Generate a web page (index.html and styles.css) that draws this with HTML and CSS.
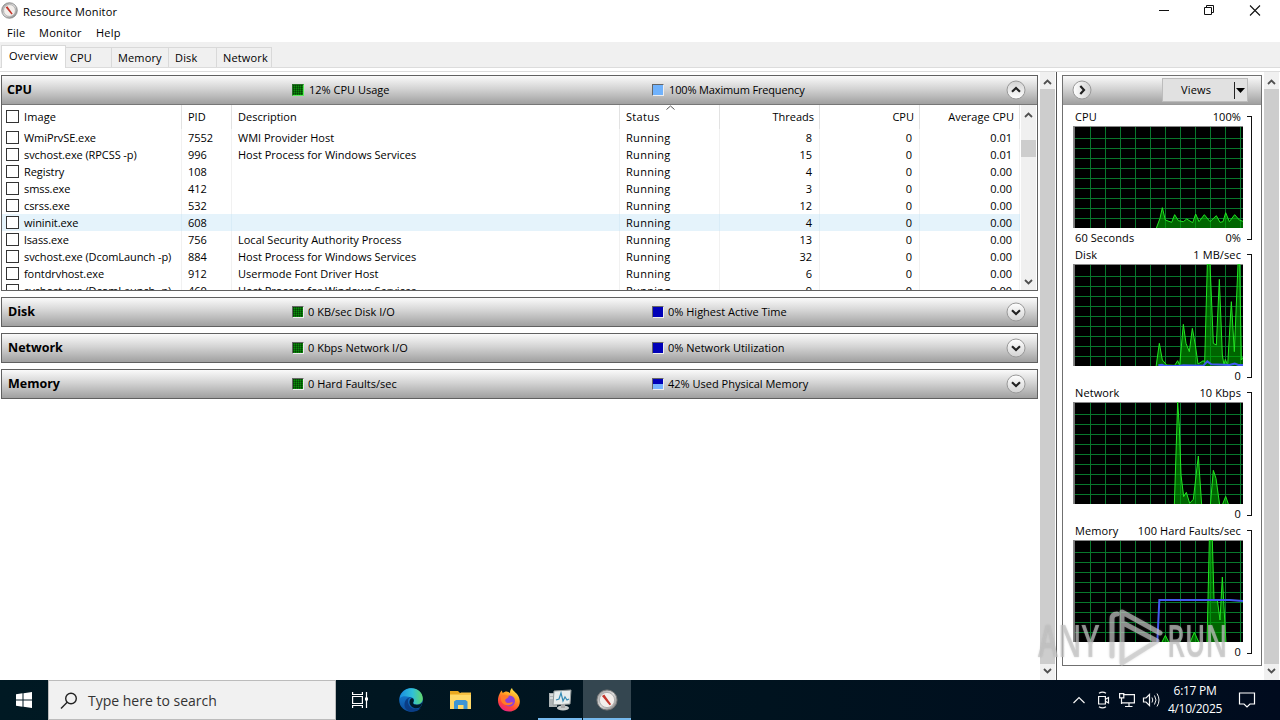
FILE: index.html
```html
<!DOCTYPE html>
<html lang="en">
<head>
<meta charset="utf-8">
<title>Resource Monitor</title>
<link rel="stylesheet" href="styles.css">
</head>
<body>
<svg width="0" height="0" class="defs">
  <defs>
    <linearGradient id="btn" x1="0" y1="0" x2="0" y2="1"><stop offset="0" stop-color="#fff"/><stop offset="1" stop-color="#d2d2d2"/></linearGradient>
    <linearGradient id="rim" x1="0" y1="0" x2="1" y2="1"><stop offset="0" stop-color="#999"/><stop offset=".5" stop-color="#ddd"/><stop offset="1" stop-color="#777"/></linearGradient>
    <linearGradient id="edgeA" x1="0" y1="0" x2="1" y2="0"><stop offset="0" stop-color="#1a8fe0"/><stop offset=".55" stop-color="#30c0d8"/><stop offset="1" stop-color="#62d86a"/></linearGradient>
    <linearGradient id="edgeB" x1="0" y1="0" x2="0" y2="1"><stop offset="0" stop-color="#1687de"/><stop offset="1" stop-color="#0c4c9c"/></linearGradient>
    <linearGradient id="fox" x1=".8" y1="0" x2=".3" y2="1"><stop offset="0" stop-color="#fff14d"/><stop offset=".4" stop-color="#ff9a22"/><stop offset=".75" stop-color="#ff4438"/><stop offset="1" stop-color="#e8208c"/></linearGradient>
    <symbol id="gauge" viewBox="0 0 24 24">
      <circle cx="12" cy="12" r="11" fill="url(#rim)" stroke="#777" stroke-width="1"/>
      <circle cx="12" cy="12" r="8.3" fill="#f3efec" stroke="#aaa"/>
      <path d="M6.500 7.500 9 6l7.500 10.500-1.700 1.200z" fill="#c3342a"/>
    </symbol>
    <symbol id="down" viewBox="0 0 20 20"><circle cx="10" cy="10" r="9" fill="url(#btn)" stroke="#999" stroke-width="1"/><path d="M6 8.300 10 12l4-3.700" fill="none" stroke="#222" stroke-width="2.200"/></symbol>
    <symbol id="chev" viewBox="0 0 9 6"><path d="M1 5 4.500 1.500 8 5" fill="none" stroke="#505050" stroke-width="1.800"/></symbol>
  </defs>
</svg>
<div class="window">
  <header class="titlebar">
    <svg class="app-icon" width="17" height="17"><use href="#gauge"/></svg>
    <span class="t-title">Resource Monitor</span>
    <svg class="caption" width="112" height="20" fill="none" stroke="#111"><path d="M7 10.500h10"/><path d="M52.500 7.500h7v7h-7zM54.500 7v-1.500h7v7H60"/><path d="m98 5.500 10 10m0-10-10 10" stroke-width="1.100"/></svg>
  </header>
  <nav class="menu"><span class="m-file">File</span><span class="m-mon">Monitor</span><span class="m-help">Help</span></nav>
  <div class="tabs">
    <span class="tab active">Overview</span><span class="tab w46">CPU</span><span class="tab w57">Memory</span><span class="tab w48">Disk</span><span class="tab w55">Network</span>
  </div>
  <div class="tabline"></div>
  <main class="content">
    <section class="left">
      <div class="panel">
        <div class="bar"><b class="name cpu">CPU</b><i class="sw green live"></i><span class="m1 ma">12% CPU Usage</span><i class="sw sky"></i><span class="m2 mb">100% Maximum Frequency</span><svg class="flip" width="20" height="20"><use href="#down"/></svg></div>
        <div class="tablewrap">
          <div class="table">
            <div class="row head"><span class="c"><i class="box"></i>Image</span><span class="c">PID</span><span class="c">Description</span><span class="c">Status<svg class="sort" width="9" height="5"><path d="M.5 4.500l4-3.500 4 3.500" fill="none" stroke="#555"/></svg></span><span class="c r">Threads</span><span class="c r">CPU</span><span class="c r">Average CPU</span></div>
            <div class="row"><span class="c"><i class="box"></i>WmiPrvSE.exe</span><span class="c">7552</span><span class="c">WMI Provider Host</span><span class="c">Running</span><span class="c r">8</span><span class="c r">0</span><span class="c r">0.01</span></div>
            <div class="row"><span class="c"><i class="box"></i>svchost.exe (RPCSS -p)</span><span class="c">996</span><span class="c">Host Process for Windows Services</span><span class="c">Running</span><span class="c r">15</span><span class="c r">0</span><span class="c r">0.01</span></div>
            <div class="row"><span class="c"><i class="box"></i>Registry</span><span class="c">108</span><span class="c"></span><span class="c">Running</span><span class="c r">4</span><span class="c r">0</span><span class="c r">0.00</span></div>
            <div class="row"><span class="c"><i class="box"></i>smss.exe</span><span class="c">412</span><span class="c"></span><span class="c">Running</span><span class="c r">3</span><span class="c r">0</span><span class="c r">0.00</span></div>
            <div class="row"><span class="c"><i class="box"></i>csrss.exe</span><span class="c">532</span><span class="c"></span><span class="c">Running</span><span class="c r">12</span><span class="c r">0</span><span class="c r">0.00</span></div>
            <div class="row hot"><span class="c"><i class="box"></i>wininit.exe</span><span class="c">608</span><span class="c"></span><span class="c">Running</span><span class="c r">4</span><span class="c r">0</span><span class="c r">0.00</span></div>
            <div class="row"><span class="c"><i class="box"></i>lsass.exe</span><span class="c">756</span><span class="c">Local Security Authority Process</span><span class="c">Running</span><span class="c r">13</span><span class="c r">0</span><span class="c r">0.00</span></div>
            <div class="row"><span class="c"><i class="box"></i>svchost.exe (DcomLaunch -p)</span><span class="c">884</span><span class="c">Host Process for Windows Services</span><span class="c">Running</span><span class="c r">32</span><span class="c r">0</span><span class="c r">0.00</span></div>
            <div class="row"><span class="c"><i class="box"></i>fontdrvhost.exe</span><span class="c">912</span><span class="c">Usermode Font Driver Host</span><span class="c">Running</span><span class="c r">6</span><span class="c r">0</span><span class="c r">0.00</span></div>
            <div class="row"><span class="c"><i class="box"></i>svchost.exe (DcomLaunch -p)</span><span class="c">460</span><span class="c">Host Process for Windows Services</span><span class="c">Running</span><span class="c r">9</span><span class="c r">0</span><span class="c r">0.00</span></div>
          </div>
          <div class="vscroll inner"><svg width="9" height="6"><use href="#chev"/></svg><i class="thumb"></i><svg class="flip" width="9" height="6"><use href="#chev"/></svg></div>
        </div>
      </div>
      <div class="bar solo"><b class="name">Disk</b><i class="sw green"></i><span class="m1">0 KB/sec Disk I/O</span><i class="sw blue"></i><span class="m2">0% Highest Active Time</span><svg width="20" height="20"><use href="#down"/></svg></div>
      <div class="bar solo"><b class="name">Network</b><i class="sw green"></i><span class="m1">0 Kbps Network I/O</span><i class="sw blue"></i><span class="m2">0% Network Utilization</span><svg width="20" height="20"><use href="#down"/></svg></div>
      <div class="bar solo"><b class="name">Memory</b><i class="sw green"></i><span class="m1">0 Hard Faults/sec</span><i class="sw mix"></i><span class="m2">42% Used Physical Memory</span><svg width="20" height="20"><use href="#down"/></svg></div>
    </section>
    <div class="vscroll"><svg width="9" height="6"><use href="#chev"/></svg><i class="thumb"></i><svg class="flip" width="9" height="6"><use href="#chev"/></svg></div>
    <aside class="side">
      <div class="graphs">
        <div class="sidebar-head"><svg class="turn" width="20" height="20"><use href="#down"/></svg><div class="views"><span>Views</span><i></i><svg width="9" height="5"><path d="M0 0h9L4.500 5z"/></svg></div></div>
        <div class="g"><div class="gmain"><div class="lbl"><span>CPU</span><span>100%</span></div>
          <div class="plot"><svg width="170" height="102" viewBox="69 168 510 306"><path class="a" d="M318 477 330 445 337 413 346 450 365 457 374 434 385 452 400 455 410 447 428 458 437 432 447 455 463 434 480 455 499 437 510 457 519 455 527 428 538 455 554 434 568 450 582 455V480z"/></svg></div>
          <div class="lbl bot"><span>60 Seconds</span><span>0%</span></div></div><i class="bracket"></i></div>
        <div class="g"><div class="gmain"><div class="lbl"><span>Disk</span><span>1 MB/sec</span></div>
          <div class="plot"><svg width="170" height="102" viewBox="69 57 510 306"><path class="a" d="M318 366 328 295 337 345 350 360 374 361 383 347 389 361 400 238 408 295 418 320 427 250 436 300 444 357 460 347 464 353 472 57H480L490 295 499 300 508 103 517 330 522 360 526 343 533 361 544 170 553 320 564 57H569L574 345 582 333V370z"/><path class="b" d="M325 361 336 359 345 363H385L400 361 460 362 472 349 484 358 538 360 554 356 565 360 582 360"/></svg></div>
          <div class="lbl bot"><span></span><span>0</span></div></div><i class="bracket"></i></div>
        <div class="g"><div class="gmain"><div class="lbl"><span>Network</span><span>10 Kbps</span></div>
          <div class="plot"><svg width="170" height="102" viewBox="69 51 510 306"><path class="a" d="M373 360 383 51 388 125 393 270 401 335 409 322 419 355 430 343 445 213 455 360H481L490 256 498 280 509 360H517L527 334 536 360z"/></svg></div>
          <div class="lbl bot"><span></span><span>0</span></div></div><i class="bracket"></i></div>
        <div class="g"><div class="gmain"><div class="lbl"><span>Memory</span><span>100 Hard Faults/sec</span></div>
          <div class="plot"><svg width="170" height="102" viewBox="129 60 510 306"><path class="a" d="M394 370 406 346 418 370zM479 370 493 337 508 370zM531 370 538 60H547L552 240 562 240 570 300 577 171 588 370z"/><path class="b" d="M382 366 388 240H600L642 243"/></svg></div>
          <div class="lbl bot"><span></span><span>0</span></div></div><i class="bracket"></i></div>
      </div>
    </aside>
    <div class="vscroll last"><svg width="9" height="6"><use href="#chev"/></svg><i class="thumb"></i><svg class="flip" width="9" height="6"><use href="#chev"/></svg></div>
  </main>
  <footer class="taskbar">
    <div class="start"><svg width="16" height="16" fill="#fff"><path d="M0 2.200 6.500 1.300V7.500H0zM7.500 1.200 16 0V7.500H7.500zM0 8.500H6.500V14.700L0 13.800zM7.500 8.500H16V16L7.500 14.800z"/></svg></div>
    <div class="search"><svg width="18" height="18" fill="none" stroke="#222" stroke-width="1.400"><circle cx="11" cy="6.500" r="5.300"/><path d="M7.200 10.300 1 16.500"/></svg><span>Type here to search</span></div>
    <div class="task tv"><svg width="18" height="18" fill="none" stroke="#fff" stroke-width="1.200"><path d="M1.600 5.500h9.800v7H1.600zM1.600 1v2.500h9.800V1M1.600 17v-2.500h9.800V17M15.500 1v16"/><path d="M14 6.500h3v3h-3z" fill="#fff" stroke="none"/></svg></div>
    <div class="task"><svg width="24" height="24"><circle cx="12" cy="12" r="11.800" fill="url(#edgeB)"/><path d="M1 8.500C3.500 2.500 8 .2 12.500.2 19 .2 23.800 5 23.800 10.500c0 3.500-2.600 6-6 6-3 0-4.300-1-3.400-2.200 1-1.400 1.300-5.300-4-5.300C6 7.500 3 8 1 10z" fill="url(#edgeA)"/><path d="M9.500 11c-2 5 2 10 7.500 10 2 0 4-.5 5-1.300-2.500 3.400-6.500 4.300-10 4C6 23 4 17 6.500 12.500 8 10 11 8.500 13 9.500c-1.500 0-3 .5-3.500 1.500z" fill="#0a3d86"/><path d="M14.300 14.300c-.8 1.700 1.200 2.500 3.800 2.500 3 0 4.700-1.500 5.200-2.500-.3 2-1.300 4-2.300 5-5 3-10.500-1-10.500-5 0-2 1-3.500 2.500-4.200 2 .5 2.200 2.700 1.300 4.200z" fill="#001a2a"/></svg></div>
    <div class="task"><svg width="24" height="24"><path d="M2 3h8l2 2h11v16H2z" fill="#e9a820"/><path d="M2 6h21v15H2z" fill="#ffd968"/><path d="M2 6h9l2-1.500h10V7H2z" fill="#f6c041"/><path d="M6 21v-7.500L8 12h9.500l2 1.500V21h-4v-4H10v4z" fill="#3d95d5"/></svg></div>
    <div class="task"><svg width="24" height="24"><path d="M2.500 6C3 4.500 4 3 5 2.500c0 1 .3 2 1 2.500C7 4 8 3.500 9.500 3.500 11 4 12 4 13 5c0-2 .5-4 2-5 .5 3 4 4 6 7.500 5 8.500-1 16-9 16C4 23.500-2 15 2.500 6z" fill="url(#fox)"/><circle cx="12.500" cy="13" r="5.500" fill="#8f40d8"/><path d="M4 8c3-2 6-.5 8 .5l-2 2c-3 1-2 4 1 4.500 2 0 3-1.500 5-.5-2 4-10 4-12-2z" fill="#ff7b29"/></svg></div>
    <div class="task run"><svg width="24" height="24"><path d="M1 5h8v14H1z" fill="#aeb4b5"/><path d="M2 7h5M2 10h5" stroke="#fff"/><path d="M6 3 23 2 22 16 5 17z" fill="#e8eded" stroke="#929999"/><path d="m8 12 3-1 2-6 2 8 2-4 2 3 2-1" fill="none" stroke="#348bb5" stroke-width="1.200"/><ellipse cx="15" cy="20" rx="6" ry="2.500" fill="#c8cccc"/><path d="M13 16h4v4h-4z" fill="#aaa"/></svg></div>
    <div class="task run current"><svg width="22" height="22"><use href="#gauge"/></svg></div>
    <div class="tray">
      <svg width="82" height="20" fill="none" stroke="#f4f4f4" stroke-width="1.200"><path d="m1.500 13 5.500-5.500 5.500 5.500"/><path d="M26.600 6.500h6.800v7.500h-6.800zM33.500 9.200l3-1.700v5.500l-3-1.700M27 3.300q3.500-2.300 7 0M27 16.700q3.500 2.300 7 0"/><path d="M51 4.600h11.400v8.300H50M57 13v3.500M53 16.500h7.500M47.600 3.600h4.200v4.200h-4.200zM49.500 8v6"/><path d="M71.500 8h2.500l3.500-3.500v11L74 12h-2.500z"/></svg>
      <svg class="waves" width="9" height="20" fill="none" stroke="#eee"><path d="M1 7.500q1.500 2.500 0 5M3.500 5.500q3 4.500 0 9M6 3.500q4 6.500 0 13"/></svg>
      <div class="clock"><span>6:17 PM</span><span class="date">4/10/2025</span></div>
      <svg class="note" width="18" height="18" fill="none" stroke="#fff" stroke-width="1.200"><path d="M1.500 2h15v11h-4.500l-3 3-3-3H1.500z"/></svg>
    </div>
  </footer>
  <div class="mark"><span class="any">ANY</span><svg width="64" height="64" fill="none" stroke-width="5" stroke-linejoin="round" stroke-linecap="round"><path d="M4 48V11q0-5 5-5M14 42V4L52 25M17 16l32 17L14 55V42"/></svg><span class="word">RUN</span></div>
</div>
</body>
</html>
```
FILE: styles.css
```css
* { box-sizing: border-box; }
body { margin: 0; width: 1280px; height: 720px; overflow: hidden; background: #fff; color: #000; font: 11px/16px "Open Sans", "Noto Sans", sans-serif; }
svg { display: block; flex: none; }
i { font-style: normal; flex: none; }
.defs { position: absolute; }
.flip { transform: rotate(180deg); }
.turn { transform: rotate(-90deg); }
.window { position: relative; display: flex; flex-direction: column; height: 720px; }
.titlebar { height: 24px; display: flex; }
.app-icon { margin: 2px 4px 0 1px; }
.t-title { padding: 4px 0 0 1px; letter-spacing: .17px; }
.caption { margin-left: auto; margin-right: 16px; }
.menu { height: 18px; display: flex; padding: 1px 0 0 7px; letter-spacing: .25px; }
.m-file { width: 32px; }
.m-mon { width: 57px; }
.tabs { height: 26px; background: #f0f0f0; border-bottom: 1px solid #dcdcdc; display: flex; align-items: flex-end; padding-left: 1px; }
.tab { height: 20px; border: 1px solid #d9d9d9; border-width: 1px 1px 0 0; padding: 2px 0 0 5px; letter-spacing: .15px; }
.tab.active { width: 65px; height: 23px; background: #fff; border-left-width: 1px; padding: 2px 0 0 7px; margin-bottom: -1px; }
.w46 { width: 46px; padding-left: 4px; } .w57 { width: 57px; padding-left: 6px; } .w48 { width: 48px; padding-left: 6px; } .w55 { width: 55px; padding-left: 6px; }
.tabline { height: 4px; border-bottom: 1px solid #dcdcdc; }
.content { height: 608px; display: flex; }
.left { width: 1040px; padding: 3px 2px 0 1px; display: flex; flex-direction: column; gap: 6px; }
.panel { height: 216px; border: 1px solid #606060; overflow: hidden; }
.bar { height: 29px; display: flex; align-items: center; background: linear-gradient(#fafafa, #d4d4d4 45%, #a0a0a0); border-bottom: 1px solid #777; padding: 0 11px 0 6px; }
.solo { height: 30px; border: 1px solid #606060; padding: 0 11px 0 6px; }
.bar > svg { margin-left: auto; }
.name { width: 284px; font-size: 12.500px; }
.cpu { text-indent: -1px; letter-spacing: -.2px; }
.sw { width: 12px; height: 12px; border: 1px solid #666; border-right-color: #eee; border-bottom-color: #eee; margin-right: 4px; }
.green { background: repeating-linear-gradient(90deg, #0005 0 1px, transparent 1px 2px), repeating-linear-gradient(#0004 0 1px, transparent 1px 2px), #0a8f0a; }
.live { border-color: #267026 #5cea5c #5cea5c #267026; }
.sky { background: #70b2fc; }
.blue { background: #0000b8; }
.mix { background: linear-gradient(#0000b8 55%, #78b4ff 55%); }
.m1 { width: 344px; }
.ma { padding-left: 1px; }
.mb { padding-left: 1px; letter-spacing: -.15px; }
.tablewrap { display: flex; height: 186px; }
.table { width: 1018px; overflow: hidden; }
.row { display: grid; grid-template-columns: 180px 50px 388px 100px 100px 100px 100px; height: 17px; }
.c { display: flex; align-items: center; border-right: 1px solid #f1f1f1; padding-left: 6px; white-space: nowrap; }
.c:first-child { padding-left: 4px; letter-spacing: -.08px; }
.c:nth-child(4) { letter-spacing: .3px; }
.r { justify-content: flex-end; padding-right: 7px; }
.head { height: 24px; }
.head .c { border-color: #e2e2e2; position: relative; }
.head .c:first-child { letter-spacing: .1px; }
.head .r { padding-right: 5px; }
.sort { position: absolute; left: 46px; top: 0; }
.hot { background: #e5f3fb; }
.hot .c { border-color: #d9ecf7; }
.box { width: 13px; height: 13px; border: 1px solid #333; background: #fff; margin-right: 5px; margin-bottom: 1px; }
.vscroll { width: 15px; display: flex; flex-direction: column; align-items: center; background: #f0f0f0; padding: 7px 0 6px; }
.vscroll .thumb { flex: 1; width: 15px; background: #cdcdcd; margin: 4px 0; }
.vscroll.inner { margin-left: 1px; padding: 7px 0 6px; }
.inner .thumb { flex: none; height: 17px; margin: 22px 0 auto; }
.side { width: 207px; margin-left: 1px; border-left: 1px solid #555; padding: 3px 0 0 5px; background: #fff; }
.graphs { width: 200px; height: 591px; border: 1px solid #707070; }
.sidebar-head { height: 29px; display: flex; align-items: center; background: linear-gradient(#fafafa, #d4d4d4 45%, #a0a0a0); padding-left: 9px; border-bottom: 1px solid #999; }
.views { margin-left: 70px; width: 86px; height: 24px; background: #e1e1e1; border: 1px solid #bcbcbc; display: flex; align-items: center; }
.views span { width: 71px; padding-left: 18px; letter-spacing: .2px; }
.views i { width: 1px; height: 17px; background: #222; margin-right: 1px; }
.g { height: 138px; display: flex; padding: 3px 0 0 10px; }
.gmain { width: 170px; }
.lbl { height: 18px; display: flex; justify-content: space-between; padding: 1px 2px 0; white-space: nowrap; letter-spacing: .1px; }
.plot { position: relative; width: 170px; height: 102px; background: repeating-linear-gradient(90deg, transparent 0 14px, #08782c 14px 15px) 3px 0, repeating-linear-gradient(transparent 0 9px, #08782c 9px 10px) 0 3px, #000; box-shadow: inset 1px 1px #888, inset 2px 0 #777; }
.plot svg { overflow: hidden; }
.a { fill: #00a80099; stroke: #22e522; stroke-width: 3; }
.b { fill: none; stroke: #4258ef; stroke-width: 6; }
.lbl.bot { padding-top: 2px; }
.bracket { width: 5px; height: 124px; border: 1px solid #111; border-left: 0; margin: 8px 0 0 4px; }
.last { margin-left: 1px; }
.taskbar { height: 40px; display: flex; background: linear-gradient(90deg, #001923, #00131f 60%, #000b1e); color: #fff; }
.start { width: 48px; padding: 12px 16px; }
.search { width: 288px; border: 1px solid #bcbcbc; background: #f1f1f1; color: #333; font-size: 14px; display: flex; align-items: center; padding: 2px 0 0 11px; gap: 10px; }
.search svg { margin-top: -1px; }
.task { width: 49px; display: flex; align-items: center; justify-content: center; border-bottom: 2px solid transparent; padding-top: 2px; }
.tv { width: 50px; padding-right: 3px; }
.run { border-color: #76b9ed; width: 44px; margin-left: 5px; background-clip: padding-box; }
.run.current { background: #344650; width: 48px; margin-left: 1px; }
.tray { margin-left: auto; display: flex; align-items: center; width: 208px; font-size: 12px; }
.waves { margin-left: -3px; }
.clock { width: 68px; margin-left: 1px; display: flex; flex-direction: column; align-items: center; line-height: 18px; letter-spacing: -.3px; }
.note { margin-left: 9px; }
.mark { position: absolute; left: 1038px; top: 608px; display: flex; align-items: center; font: 600 45px/64px "Open Sans", sans-serif; color: #c8c8c8a6; text-shadow: 0 0 2px #8886; }
.any { width: 70px; transform: scaleX(.67); transform-origin: left; }
.word { transform: scaleX(.62); transform-origin: left; margin-left: -5px; }
.mark svg { stroke: #c8c8c8a6; filter: drop-shadow(0 0 1px #8886); }
```
